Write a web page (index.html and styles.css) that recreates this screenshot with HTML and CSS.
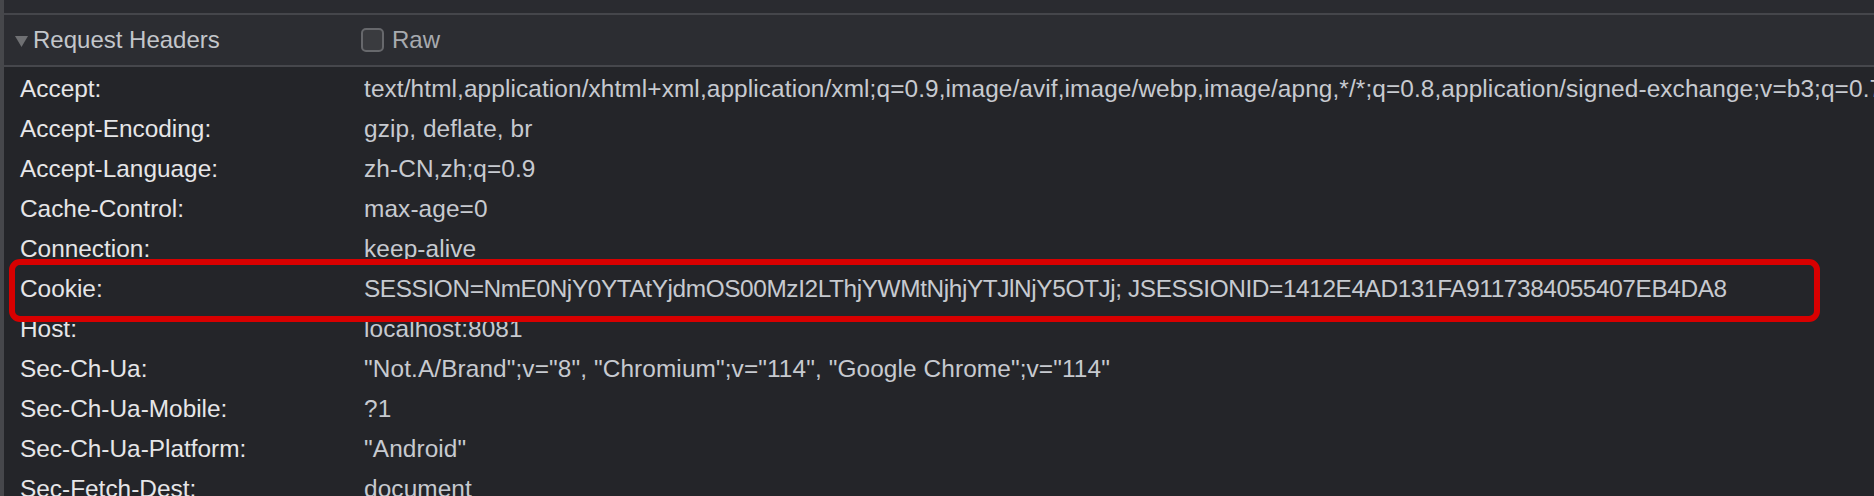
FILE: index.html
```html
<!DOCTYPE html>
<html>
<head>
<meta charset="utf-8">
<link rel="stylesheet" href="styles.css">
</head>
<body>
<div class="app">
  <div class="gutter"></div>
  <div class="panel">
    <div class="topbar"></div>
    <div class="section-head">
      <div class="head-left">
        <svg class="caret" width="13" height="11" viewBox="0 0 13 11"><path d="M0 0H13L6.5 11Z" fill="#6f7073"/></svg>
        <span class="title">Request Headers</span>
      </div>
      <label class="raw"><span class="box"></span><span>Raw</span></label>
    </div>
    <div class="rows">
      <div class="row"><div class="name">Accept:</div><div class="value">text/html,application/xhtml+xml,application/xml;q=0.9,image/avif,image/webp,image/apng,*/*;q=0.8,application/signed-exchange;v=b3;q=0.7</div></div>
      <div class="row"><div class="name">Accept-Encoding:</div><div class="value">gzip, deflate, br</div></div>
      <div class="row"><div class="name">Accept-Language:</div><div class="value">zh-CN,zh;q=0.9</div></div>
      <div class="row"><div class="name">Cache-Control:</div><div class="value">max-age=0</div></div>
      <div class="row"><div class="name">Connection:</div><div class="value">keep-alive</div></div>
      <div class="row"><div class="name">Cookie:</div><div class="value value-tight">SESSION=NmE0NjY0YTAtYjdmOS00MzI2LThjYWMtNjhjYTJlNjY5OTJj; JSESSIONID=1412E4AD131FA9117384055407EB4DA8</div></div>
      <div class="row"><div class="name">Host:</div><div class="value">localhost:8081</div></div>
      <div class="row"><div class="name">Sec-Ch-Ua:</div><div class="value">"Not.A/Brand";v="8", "Chromium";v="114", "Google Chrome";v="114"</div></div>
      <div class="row"><div class="name">Sec-Ch-Ua-Mobile:</div><div class="value">?1</div></div>
      <div class="row"><div class="name">Sec-Ch-Ua-Platform:</div><div class="value">"Android"</div></div>
      <div class="row"><div class="name">Sec-Fetch-Dest:</div><div class="value">document</div></div>
    </div>
  </div>
  <div class="highlight"></div>
</div>
</body>
</html>
```
FILE: styles.css
```css
html, body {
  margin: 0;
  padding: 0;
  background: #242529;
  overflow: hidden;
}
.app {
  position: relative;
  display: flex;
  width: 1874px;
  height: 496px;
  overflow: hidden;
  font-family: "Liberation Sans", Arial, sans-serif;
  font-size: 24px;
}
.gutter {
  width: 4px;
  flex: none;
  background: #46474b;
}
.panel {
  flex: 1;
  min-width: 0;
  display: flex;
  flex-direction: column;
  background: #242529;
}
.topbar {
  height: 13px;
  background: #2a2b30;
  border-bottom: 2px solid #45464b;
  flex: none;
}
.section-head {
  height: 50px;
  flex: none;
  display: grid;
  grid-template-columns: 346px 1fr;
  align-items: center;
  padding-left: 11px;
  background: #2c2d32;
  border-bottom: 2px solid #46474c;
}
.head-left {
  display: flex;
  align-items: center;
  gap: 5px;
}
.caret {
  display: block;
  margin-top: 2px;
}
.title {
  color: #c3c6cb;
}
.raw {
  display: flex;
  align-items: center;
  gap: 8px;
  color: #a7aaaf;
}
.box {
  width: 19px;
  height: 20px;
  border: 2px solid #67686c;
  border-radius: 5px;
  background: #3a3b3f;
}
.rows {
  padding-top: 2px;
  font-size: 24.4px;
}
.row {
  display: grid;
  grid-template-columns: 344px 1fr;
  height: 40px;
  align-items: center;
  padding-left: 16px;
  white-space: nowrap;
}
.name {
  color: #e6e6e8;
}
.value {
  color: #c7cad0;
  overflow: hidden;
  letter-spacing: 0.1px;
}
.value-tight {
  letter-spacing: -0.4px;
}
.highlight {
  position: absolute;
  left: 9px;
  top: 259px;
  width: 1799px;
  height: 51px;
  border: 6px solid #d80000;
  border-radius: 11px;
}
```
